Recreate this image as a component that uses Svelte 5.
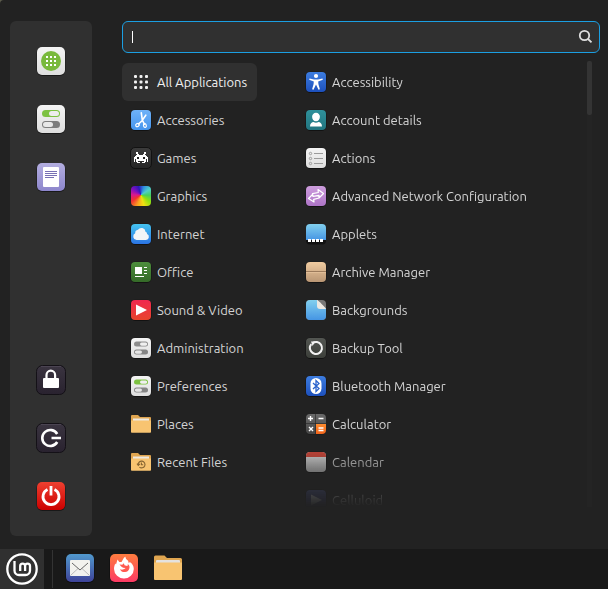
<script>
  const favourites = [
    { icon: 'manager', label: 'Software Manager' },
    { icon: 'toggles', label: 'System Settings' },
    { icon: 'document', label: 'Text Editor' }
  ];
  const session = [
    { icon: 'lock', label: 'Lock Screen' },
    { icon: 'logout', label: 'Logout' },
    { icon: 'power', label: 'Quit' }
  ];
  const categories = [
    { icon: 'grid', label: 'All Applications' },
    { icon: 'scissors', label: 'Accessories' },
    { icon: 'games', label: 'Games' },
    { icon: 'graphics', label: 'Graphics' },
    { icon: 'cloud', label: 'Internet' },
    { icon: 'office', label: 'Office' },
    { icon: 'play', label: 'Sound & Video' },
    { icon: 'admin', label: 'Administration' },
    { icon: 'prefs', label: 'Preferences' },
    { icon: 'folder', label: 'Places' },
    { icon: 'recent', label: 'Recent Files' }
  ];
  const apps = [
    { icon: 'access', label: 'Accessibility' },
    { icon: 'account', label: 'Account details' },
    { icon: 'actions', label: 'Actions' },
    { icon: 'network', label: 'Advanced Network Configuration' },
    { icon: 'applets', label: 'Applets' },
    { icon: 'archive', label: 'Archive Manager' },
    { icon: 'backgrounds', label: 'Backgrounds' },
    { icon: 'backup', label: 'Backup Tool' },
    { icon: 'bluetooth', label: 'Bluetooth Manager' },
    { icon: 'calculator', label: 'Calculator' },
    { icon: 'calendar', label: 'Calendar' },
    { icon: 'celluloid', label: 'Celluloid' }
  ];
  const gradients = [
    ['white', '#f4f4f4', '#dedede'],
    ['lilac', '#b3aee0', '#8d86cc'],
    ['dark', '#3a3440', '#29222f'],
    ['red', '#ee4030', '#cc0000'],
    ['sky', '#6fb2f8', '#4595ee'],
    ['black', '#3c3c3c', '#262626'],
    ['net', '#45c4f0', '#2b74e4'],
    ['green', '#4d8e3c', '#356a28'],
    ['media', '#f0284f', '#e8442c'],
    ['blue', '#3d7de0', '#1d50bc'],
    ['teal', '#2f919b', '#227580'],
    ['violet', '#cd9ddd', '#ad74c6'],
    ['aqua', '#82d0ee', '#4595e4'],
    ['tan', '#f0cba0', '#b99674'],
    ['olive', '#535652', '#3c3f3a'],
    ['grey', '#6a6a6a', '#454545'],
    ['orange', '#ff8c2e', '#f0641c'],
    ['page', '#eeeeee', '#bdbdbd'],
    ['navy', '#47507f', '#2e2f78'],
    ['mail', '#5199cd', '#3e4399'],
    ['fox', '#ff7d3f', '#fc3a64']
  ];

  let query = $state('');
  let selected = $state('All Applications');
</script>

{#snippet tile(fill)}
  <rect x="0.5" y="0.7" width="21" height="21.200" rx="4.500" fill="#000" opacity=".45" />
  <rect x="1" y="1" width="20" height="20" rx="4" fill="url(#g-{fill})" />
{/snippet}

{#snippet bigTile(fill)}
  <rect x="0.5" y="1" width="29" height="29" rx="6" fill="#000" opacity=".5" />
  <rect x="1" y="1" width="28" height="28" rx="5" fill="url(#g-{fill})" />
{/snippet}

{#snippet darkTile()}
  <rect x="0.5" y="0.5" width="29" height="29" rx="6" fill="url(#g-dark)" stroke="#141117" />
  <path d="M5 1.500h20" stroke="#4b4452" />
{/snippet}

{#snippet smallIcon(name)}
  <svg class="small" viewBox="0 0 22 22" aria-hidden="true">
    {#if name === 'grid'}
      {#each [4, 9.5, 15] as y}
        {#each [4, 9.5, 15] as x}
          <rect {x} {y} width="3" height="3" rx="1" fill="#f2f2f2" />
        {/each}
      {/each}
    {:else if name === 'scissors'}
      {@render tile('sky')}
      <g fill="none" stroke="#fff" stroke-linecap="round">
        <path d="M11.3 3.8 12.3 11l2.1 4.2M15.8 6.2 11.8 12l-3.3 3" stroke-width="1.6" />
        <ellipse cx="7.5" cy="16" rx="1.9" ry="1.5" transform="rotate(-35 7.5 16)" stroke-width="1.2" />
        <ellipse cx="14.9" cy="16.6" rx="1.4" ry="1.9" transform="rotate(-15 14.9 16.6)" stroke-width="1.2" />
      </g>
    {:else if name === 'games'}
      <rect x="0.5" y="0.5" width="21" height="21" rx="4.500" fill="url(#g-black)" stroke="#121212" />
      <path fill="#fff" d="M6 5h2v2h1v1h4V7h1V5h2v2h-1v1h1v1h1v1h1v5h-1v-3h-1v3h-1v1h-3v-1h2v-1H8v1h2v1H7v-1H6v-3H5v3H4v-5h1V9h1V8h1V7H6z" />
      <path fill="#222" d="M7 10h2v2H7zM13 10h2v2h-2z" />
    {:else if name === 'graphics'}
      <foreignObject x="1" y="1" width="20" height="20"><div class="wheel"></div></foreignObject>
    {:else if name === 'cloud'}
      {@render tile('net')}
      <path fill="#f3f5f7" d="M6.6 17A3.6 3.6 0 0 1 5.2 10.2 3.3 3.3 0 0 1 8 6.8a4.1 4.1 0 0 1 7.5 2 2.3 2.3 0 0 1 1.6 2.3A3.1 3.1 0 0 1 16 17z" />
    {:else if name === 'office'}
      {@render tile('green')}
      <path fill="#fff" d="M5 6h7v7H5zM5 15h9v1H5zM14 6h3v1h-3zM14 9h3v1h-3zM14 12h3v1h-3z" />
    {:else if name === 'play'}
      {@render tile('media')}
      <path fill="#fff" d="M6 5.5 17 11 6 16.5z" />
    {:else if name === 'admin' || name === 'prefs'}
      {@render tile('white')}
      <rect x="4" y="4.6" width="14" height="5" rx="2.5" fill={name === 'prefs' ? '#7dc242' : '#8c8c8c'} />
      <rect x="10" y="5.4" width="7.2" height="3.4" rx="1.7" fill="#f0f0f0" />
      <rect x="4" y="12.6" width="14" height="5" rx="2.5" fill="#858585" />
      <rect x="4.8" y="13.4" width="7.2" height="3.4" rx="1.7" fill="#e6e6e6" />
    {:else if name === 'folder' || name === 'recent'}
      <path d="M1 3a1 1 0 0 1 1-1h6l2 2h10a1 1 0 0 1 1 1v5H1z" fill="#dfa550" />
      <path d="M3 5.5h16v3H3z" fill="#eee9e0" />
      <path d="M1 7.5h20V19a.8.8 0 0 1-.8.8H1.8A.8.8 0 0 1 1 19z" fill="#f8c471" />
      {#if name === 'recent'}
        <g fill="none" stroke="#876532" stroke-width="1.1">
          <path d="M8.2 13.8a3.4 3.4 0 1 1 1.2 2.3M7 12.6l1.3 1.8 1.6-1.6" />
          <path d="M11.4 11.6v2.2h1.8" />
        </g>
      {/if}
    {:else if name === 'access'}
      {@render tile('blue')}
      <circle cx="11" cy="5" r="2.1" fill="#fff" />
      <path d="M4.5 7.5 9 8.6h4l4.500-1.1.3 1.2-4.600 1.700.2 2.600 1.500 5.300-1.400.4L11 13.500l-2.500 5.200-1.400-.4L8.600 13l.2-2.600-4.600-1.700z" fill="#fff" />
    {:else if name === 'account'}
      {@render tile('teal')}
      <path d="M11 3.700a3.900 3.900 0 0 1 3.900 4c0 2.300-1.600 4.600-3.900 4.600S7.100 10 7.100 7.700a3.900 3.900 0 0 1 3.900-4M5 17.500c0-3 1.700-4.500 3.600-4.500 1.300 1 3.500 1 4.800 0 1.900 0 3.600 1.500 3.600 4.500z" fill="#fff" />
    {:else if name === 'actions'}
      {@render tile('white')}
      <g fill="none" stroke="#9a9a9a">
        <circle cx="5.500" cy="6.500" r="1.200" /><circle cx="5.500" cy="11.500" r="1.200" /><circle cx="5.500" cy="16.500" r="1.200" />
        <path d="M9 6.500h9M9 11.500h9M9 16.500h9" />
      </g>
    {:else if name === 'network'}
      {@render tile('violet')}
      <path fill="none" stroke="#fff" stroke-width="1.200" stroke-linejoin="round" d="M13 4.500 18.500 8.500 14.500 12.500 14 10.400 8 11.300 7.500 8.600 13.300 7.500zM9 17 3.500 13.500 7.500 9.500 8 11.500 13.600 10.600 14.200 13 8.700 14.300z" />
    {:else if name === 'applets'}
      <rect x="1" y="1.500" width="20" height="20" rx="4" fill="#111" />
      <path d="M1 17V5a4 4 0 0 1 4-4h12a4 4 0 0 1 4 4v12z" fill="url(#g-aqua)" />
      <path fill="#fff" d="M3 16h3v3H3zM7 16h3v3H7zM11 16h3v3h-3zM15 16h3v3h-3z" />
    {:else if name === 'archive'}
      {@render tile('tan')}
      <path d="M1 10.500h20" stroke="#9c7b5c" /><path d="M1 11.500h20" stroke="#e0bd97" />
    {:else if name === 'backgrounds'}
      <rect x="1" y="1" width="20" height="20" rx="4" fill="#777" />
      <path d="M12 1H5a4 4 0 0 0-4 4v12a4 4 0 0 0 4 4h12a4 4 0 0 0 4-4v-7z" fill="url(#g-aqua)" />
      <path d="M12 1c1 0 9 8 9 9h-6a3 3 0 0 1-3-3z" fill="#ece8e1" />
    {:else if name === 'backup'}
      {@render tile('olive')}
      <circle cx="11" cy="11" r="6" fill="none" stroke="#f2f2f2" stroke-width="2" stroke-dasharray="35 2.700" transform="rotate(235 11 11)" />
      <path d="M6 4.500h4.500L7.500 9z" fill="#f2f2f2" />
    {:else if name === 'bluetooth'}
      {@render tile('blue')}
      <rect x="5.500" y="3" width="11" height="16" rx="5.500" fill="#fff" />
      <path d="m8 8 6 5.500-3 3v-11l3 3L8 14" fill="none" stroke="#2a62cc" stroke-width="1.300" />
    {:else if name === 'calculator'}
      <rect x="1" y="1.500" width="20" height="20" rx="4" fill="#191919" />
      <path d="M10.500 1H5a4 4 0 0 0-4 4v5.500h9.500zM11 1h6a4 4 0 0 1 4 4v5.500H11zM1 11h9.500v10H5a4 4 0 0 1-4-4z" fill="url(#g-grey)" />
      <path d="M11 11h10v6a4 4 0 0 1-4 4h-6z" fill="url(#g-orange)" />
      <path d="M3 5.500h5M5.500 3v5M13.500 5.500h5M4 14l4 4M8 14l-4 4M13.500 15h5M13.500 17.500h5" stroke="#fff" stroke-width="1.400" />
    {:else if name === 'calendar'}
      {@render tile('page')}
      <path d="M1 6V5a4 4 0 0 1 4-4h12a4 4 0 0 1 4 4v1z" fill="#d94a3c" />
    {:else if name === 'celluloid'}
      {@render tile('navy')}
      <path fill="#c8ccd6" d="M6 5.500 17 11 6 16.500z" />
    {/if}
  </svg>
{/snippet}

{#snippet largeIcon(name)}
  <svg class="large" viewBox="0 0 30 30" aria-hidden="true">
    {#if name === 'manager'}
      {@render bigTile('white')}
      <circle cx="15" cy="15" r="10" fill="#79b93c" />
      {#each [10, 14, 18] as y}
        {#each [10, 14, 18] as x}
          <rect {x} {y} width="2" height="2" fill="#fff" />
        {/each}
      {/each}
    {:else if name === 'toggles'}
      {@render bigTile('white')}
      <rect x="6" y="6" width="18" height="7" rx="3.500" fill="#7dc242" />
      <rect x="13" y="7" width="10" height="5" rx="2.500" fill="#ededed" />
      <rect x="6" y="17" width="18" height="7" rx="3.500" fill="#7d7d7d" />
      <rect x="7" y="18" width="10" height="5" rx="2.500" fill="#e8e8e8" />
    {:else if name === 'document'}
      {@render bigTile('lilac')}
      <rect x="7" y="5" width="16" height="20" rx="1" fill="#fff" />
      <path d="M9 9.500h12M9 11.500h12M9 13.500h12M9 15.500h9" stroke="#7770b4" />
    {:else if name === 'lock'}
      {@render darkTile()}
      <path d="M10.500 14v-4a4.300 4.300 0 0 1 8.600 0v4" fill="none" stroke="#fff" stroke-width="2.200" />
      <rect x="7" y="13" width="16" height="10" rx="1" fill="#fff" />
    {:else if name === 'logout'}
      {@render darkTile()}
      <path d="M21.200 11a8 8 0 1 0 0 8M15.500 15h9.500" fill="none" stroke="#fff" stroke-width="2.600" />
    {:else if name === 'power'}
      {@render bigTile('red')}
      <path d="M11.500 8.500a8 8 0 1 0 7 0M15 5v9.500" fill="none" stroke="#fff" stroke-width="2.800" />
    {:else if name === 'mail'}
      {@render bigTile('mail')}
      <rect x="5" y="7" width="20" height="16" rx="1" fill="#f2f2ee" />
      <path d="m6 22 7-6.500M24 22l-7-6.500" stroke="#bbb" /><path d="m7 10 8 7 8-7" fill="none" stroke="#676767" />
    {:else if name === 'firefox'}
      {@render bigTile('fox')}
      <path fill="#fff" d="M8.500 6.500 10.300 9h2.200l2-3.500c.2-1 1.200-1.500 2-1.800-.1 2 1 2.700 2.600 4l.7 2.500 1-1.300c2.500 1.500 4 4 4 7A9.700 9.700 0 0 1 15 25.500 9.800 9.800 0 0 1 5 16c0-2.200.6-4.200 1.500-5.500l.5 1z" />
      <path fill="#ff5a50" d="m10.500 11.500 2.700.2 1.700-1.400.6 2 2.700.7c.8-.6.8-1.500.2-2.300 1.800 1 2.500 2.800 2 4.600a5 5 0 0 1-9.400.9l2 .6 2.300-.8 1.300-1-2.500-.2-1.900-1.200z" />
    {:else if name === 'files'}
      <path d="M1 4a1.500 1.500 0 0 1 1.500-1.500h9L14 5h13.500A1.500 1.500 0 0 1 29 6.500V13H1z" fill="#dfa550" />
      <rect x="3" y="7" width="24" height="4" rx="1" fill="#e5e2df" />
      <path d="M1 9.500h28V26a1 1 0 0 1-1 1H2a1 1 0 0 1-1-1z" fill="#f8c471" />
    {/if}
  </svg>
{/snippet}

<svg class="defs" aria-hidden="true">
  <defs>
    {#each gradients as [id, from, to]}
      <linearGradient id="g-{id}" x2="0" y2="1">
        <stop stop-color={from} /><stop offset="1" stop-color={to} />
      </linearGradient>
    {/each}
  </defs>
</svg>

<div class="desktop">
  <main class="menu">
    <nav class="sidebar" aria-label="Favourites and session">
      <div class="group">
        {#each favourites as item}
          <button class="side" aria-label={item.label}>{@render largeIcon(item.icon)}</button>
        {/each}
      </div>
      <div class="group">
        {#each session as item}
          <button class="side" aria-label={item.label}>{@render largeIcon(item.icon)}</button>
        {/each}
      </div>
    </nav>

    <div class="content">
      <div class="search">
        <input type="text" aria-label="Search applications" bind:value={query} />
        {#if !query}<span class="caret"></span>{/if}
        <svg class="lens" viewBox="0 0 16 16" aria-hidden="true">
          <circle cx="7.500" cy="6.500" r="4.700" fill="none" stroke="#dedede" stroke-width="1.800" />
          <path d="m11 10 3.500 3.300" stroke="#dedede" stroke-width="1.800" />
        </svg>
      </div>

      <div class="columns">
        <ul class="categories">
          {#each categories as item}
            <li>
              <button class="row" class:active={selected === item.label} onclick={() => (selected = item.label)}>
                {@render smallIcon(item.icon)}<span>{item.label}</span>
              </button>
            </li>
          {/each}
        </ul>
        <ul class="apps">
          {#each apps as item}
            <li><button class="row">{@render smallIcon(item.icon)}<span>{item.label}</span></button></li>
          {/each}
        </ul>
        <div class="track"><div class="thumb"></div></div>
      </div>
    </div>
  </main>

  <footer class="panel">
    <button class="start" aria-label="Menu">
      <svg class="logo" viewBox="0 0 32 32" fill="none" stroke="#fff" aria-hidden="true">
        <circle cx="16" cy="16" r="14.700" stroke-width="2.300" />
        <path d="M8.500 8v9.500a4.500 4.500 0 0 0 4.500 4.500h6.500a4.500 4.500 0 0 0 4.500-4.500v-4.500a2.400 2.400 0 0 0-4.900 0V18M19.100 13a2.400 2.400 0 0 0-4.900 0V18" stroke-width="2.300" />
      </svg>
    </button>
    <div class="divider"></div>
    <button class="launcher" aria-label="Mail">{@render largeIcon('mail')}</button>
    <button class="launcher" aria-label="Firefox">{@render largeIcon('firefox')}</button>
    <button class="launcher" aria-label="Files">{@render largeIcon('files')}</button>
  </footer>
</div>

<style>
  :global(body) {
    background: #5c5c4c;
  }
  .desktop {
    display: flex;
    flex-direction: column;
    height: 100vh;
    min-height: 480px;
    font-family: Ubuntu, 'Noto Sans', sans-serif;
    font-size: 13px;
    line-height: 18px;
    color: #d4d4d4;
  }
  .defs {
    position: absolute;
    width: 0;
    height: 0;
  }
  svg {
    display: block;
    flex: none;
  }
  button {
    margin: 0;
    padding: 0;
    border: 0;
    background: none;
    color: inherit;
    font: inherit;
  }
  ul {
    margin: 0;
    padding: 0;
    list-style: none;
  }
  .small {
    width: 22px;
    height: 22px;
  }
  .large {
    width: 30px;
    height: 30px;
  }
  .wheel {
    height: 20px;
    border-radius: 4px;
    background: conic-gradient(from 20deg at 50% 45%, #2f8fe0, #4fd0c8, #45d060, #90e010, #f0e010, #fba020, #f03030, #d81890, #7a10c0, #2c18b8, #2f8fe0);
  }
  .menu {
    display: flex;
    flex: 1;
    gap: 30px;
    min-height: 0;
    box-sizing: border-box;
    padding: 21px 8px 13px 10px;
    border-top-left-radius: 4px;
    background: #222;
  }
  .sidebar {
    display: flex;
    flex: none;
    flex-direction: column;
    justify-content: space-between;
    box-sizing: border-box;
    width: 82px;
    padding: 11px 0;
    border-radius: 6px;
    background: #303030;
  }
  .group {
    display: flex;
    flex-direction: column;
  }
  .side {
    display: flex;
    align-items: center;
    justify-content: center;
    height: 58px;
  }
  .content {
    display: flex;
    flex: 1;
    flex-direction: column;
    gap: 8px;
    min-width: 0;
  }
  .search {
    display: flex;
    position: relative;
    flex: none;
  }
  input {
    width: 100%;
    height: 32px;
    box-sizing: border-box;
    padding: 0 32px 0 9px;
    border: 1px solid #1b9fe2;
    border-radius: 6px;
    outline: none;
    background: #303030;
    color: #eee;
    font: inherit;
  }
  .caret {
    position: absolute;
    top: 10px;
    left: 10px;
    width: 1px;
    height: 12px;
    background: #fff;
  }
  .lens {
    position: absolute;
    top: 8px;
    right: 7px;
    width: 16px;
    height: 16px;
  }
  .columns {
    display: flex;
    flex: 1;
    min-height: 0;
    margin-bottom: 29px;
  }
  .categories {
    flex: none;
    width: 135px;
    padding-top: 2px;
    margin-right: 40px;
  }
  .apps {
    flex: 1;
    min-width: 0;
    padding-top: 2px;
    overflow: hidden;
    mask-image: linear-gradient(to top, transparent, #000 68px);
  }
  .row {
    display: flex;
    align-items: center;
    gap: 5px;
    box-sizing: border-box;
    width: 100%;
    height: 38px;
    padding: 0 8px;
    border-radius: 6px;
    text-align: left;
    white-space: nowrap;
  }
  .active {
    background: #303030;
    color: #f0f0f0;
  }
  .track {
    flex: none;
    width: 5px;
    margin-right: 8px;
    background: #242424;
  }
  .thumb {
    height: 54px;
    border-radius: 2px;
    background: #343434;
  }
  .panel {
    display: flex;
    flex: none;
    height: 40px;
    background: #191919;
  }
  .start,
  .launcher {
    display: flex;
    align-items: center;
    justify-content: center;
    width: 44px;
  }
  .start {
    background: #303030;
  }
  .launcher {
    padding-bottom: 2px;
  }
  .logo {
    width: 32px;
    height: 32px;
  }
  .divider {
    width: 1px;
    margin: 1px 5px 1px 8px;
    background: #333;
  }
</style>
